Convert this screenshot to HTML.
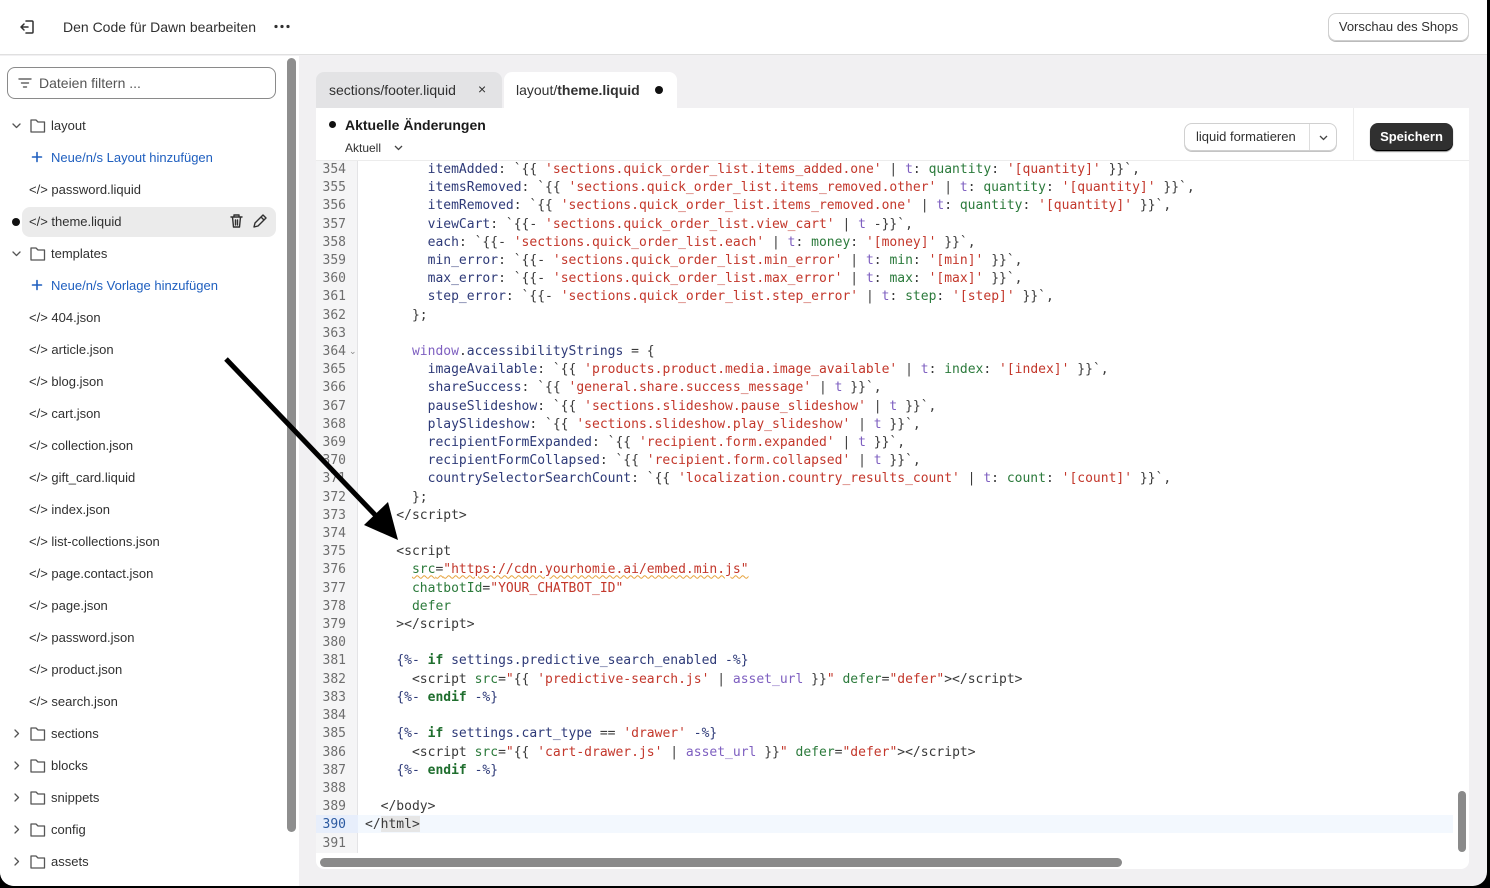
<!DOCTYPE html>
<html><head><meta charset="utf-8">
<style>
*{margin:0;padding:0;box-sizing:border-box}
body{width:1490px;height:888px;background:#000;font-family:"Liberation Sans",sans-serif;overflow:hidden;position:relative}
#page{position:absolute;left:0;top:0;width:1487px;height:886px;background:#f1f0f2;border-radius:0 0 14px 14px;overflow:hidden}
#top{position:absolute;left:0;top:0;width:1487px;height:55px;background:#fff;border-bottom:1px solid #e0e0e0}
#side{position:absolute;left:0;top:56px;width:299px;height:830px;background:#fff}
.ab{position:absolute;white-space:nowrap}
.si{position:absolute;font-size:13px;color:#303030;white-space:nowrap;line-height:16px}
.code{position:absolute;font-family:"DejaVu Sans Mono","Liberation Mono",monospace;font-size:13px;white-space:pre;line-height:18.2px;color:#3a3a3a}
.n{color:#2e3a78}.s{color:#c3372b}.p{color:#7e5fc0}.g{color:#2b7a3b}.k{color:#1f6e2e;font-weight:bold}
.w{text-decoration:underline wavy #e6a23c;text-decoration-thickness:1px}
</style></head><body>
<div id="page">
<div id="top">
 <svg class="ab" style="left:18px;top:18px" width="18" height="18" viewBox="0 0 18 18" fill="none" stroke="#303030" stroke-width="1.5" stroke-linecap="round" stroke-linejoin="round"><path d="M8 3h6a1 1 0 0 1 1 1v10a1 1 0 0 1-1 1H8"/><path d="M10 9H3M6 6 3 9l3 3"/></svg>
 <div class="ab" style="left:63px;top:19px;font-size:14px;color:#303030">Den Code für Dawn bearbeiten</div>
 <svg class="ab" style="left:274px;top:24px" width="16" height="5" fill="#303030"><circle cx="2" cy="2.5" r="1.6"/><circle cx="8" cy="2.5" r="1.6"/><circle cx="14" cy="2.5" r="1.6"/></svg>
 <div class="ab" style="left:1328px;top:13px;width:141px;height:28px;border:1px solid #cfcfcf;border-radius:8px;box-shadow:0 1px 0 #bbb;font-size:13px;color:#303030;text-align:center;line-height:26px">Vorschau des Shops</div>
</div>
<div id="side">
 <div class="ab" style="left:7px;top:11px;width:269px;height:32px;border:1px solid #8a8a8a;border-radius:8px"></div>
 <svg class="ab" style="left:18px;top:21px" width="14" height="12" stroke="#666" stroke-width="1.4" stroke-linecap="round"><path d="M1 2h12M3.5 6h7M5.5 10h3"/></svg>
 <div class="si" style="left:39px;top:19px;font-size:14px;color:#555">Dateien filtern ...</div>
 <div class="ab" style="left:287px;top:2px;width:9px;height:774px;background:#8e8e8e;border-radius:5px"></div>
 <div class="ab" style="left:22px;top:151px;width:254px;height:30px;background:#ebebeb;border-radius:8px"></div>
 <div class="ab" style="left:12px;top:162px;width:8px;height:8px;background:#111;border-radius:50%"></div>
</div>
<div id="sideitems" style="position:absolute;left:0;top:0">
<svg class="ab" style="left:0;top:0" width="60" height="888" fill="none" stroke="#555" stroke-width="1.3" stroke-linecap="round" stroke-linejoin="round">
 <g id="fo"><path d="M31 120h5l2 2h6.5v10h-13.5z"/></g>
 <path d="M13 124l3.5 3.5 3.5-3.5"/>
 <use href="#fo" y="128"/><path d="M13 252l3.5 3.5 3.5-3.5"/>
 <use href="#fo" y="608"/><path d="M15 730l3.5 3.5-3.5 3.5"/>
 <use href="#fo" y="640"/><path d="M15 762l3.5 3.5-3.5 3.5"/>
 <use href="#fo" y="672"/><path d="M15 794l3.5 3.5-3.5 3.5"/>
 <use href="#fo" y="704"/><path d="M15 826l3.5 3.5-3.5 3.5"/>
 <use href="#fo" y="736"/><path d="M15 858l3.5 3.5-3.5 3.5"/>
 <path stroke="#1f5fbf" stroke-width="1.6" d="M32.5 157h9M37 152.5v9M32.5 285h9M37 280.5v9"/>
</svg>
<div class="si" style="left:51px;top:118px">layout</div>
<div class="si" style="left:51px;top:150px;color:#1f5fbf">Neue/n/s Layout hinzufügen</div>
<div class="si" style="left:29px;top:182px">&lt;/&gt; password.liquid</div>
<div class="si" style="left:29px;top:214px">&lt;/&gt; theme.liquid</div>
<svg class="ab" style="left:228px;top:213px" width="42" height="17" fill="none" stroke="#303030" stroke-width="1.4" stroke-linecap="round" stroke-linejoin="round"><path d="M3 4h11M6 4V2h5v2M4.5 4l1 10h6l1-10M7.5 7v5M9.5 7v5"/><path d="M26 14l1-4 8-8 3 3-8 8z M33 4l3 3"/></svg>
<div class="si" style="left:51px;top:246px">templates</div>
<div class="si" style="left:51px;top:278px;color:#1f5fbf">Neue/n/s Vorlage hinzufügen</div>
<div class="si" style="left:29px;top:310px">&lt;/&gt; 404.json</div>
<div class="si" style="left:29px;top:342px">&lt;/&gt; article.json</div>
<div class="si" style="left:29px;top:374px">&lt;/&gt; blog.json</div>
<div class="si" style="left:29px;top:406px">&lt;/&gt; cart.json</div>
<div class="si" style="left:29px;top:438px">&lt;/&gt; collection.json</div>
<div class="si" style="left:29px;top:470px">&lt;/&gt; gift_card.liquid</div>
<div class="si" style="left:29px;top:502px">&lt;/&gt; index.json</div>
<div class="si" style="left:29px;top:534px">&lt;/&gt; list-collections.json</div>
<div class="si" style="left:29px;top:566px">&lt;/&gt; page.contact.json</div>
<div class="si" style="left:29px;top:598px">&lt;/&gt; page.json</div>
<div class="si" style="left:29px;top:630px">&lt;/&gt; password.json</div>
<div class="si" style="left:29px;top:662px">&lt;/&gt; product.json</div>
<div class="si" style="left:29px;top:694px">&lt;/&gt; search.json</div>
<div class="si" style="left:51px;top:726px">sections</div>
<div class="si" style="left:51px;top:758px">blocks</div>
<div class="si" style="left:51px;top:790px">snippets</div>
<div class="si" style="left:51px;top:822px">config</div>
<div class="si" style="left:51px;top:854px">assets</div>
</div>

<div class="ab" style="left:316px;top:72px;width:186px;height:38px;background:#e3e3e5;border-radius:8px 8px 0 0"></div>
<div class="ab" style="left:329px;top:82px;font-size:14px;color:#303030">sections/footer.liquid</div>
<div class="ab" style="left:478px;top:81px;font-size:14px;color:#303030">×</div>
<div class="ab" style="left:504px;top:72px;width:173px;height:38px;background:#fff;border-radius:8px 8px 0 0"></div>
<div class="ab" style="left:516px;top:82px;font-size:14px;color:#303030">layout/<b>theme.liquid</b></div>
<div class="ab" style="left:655px;top:86px;width:8px;height:8px;background:#111;border-radius:50%"></div>

<div class="ab" style="left:316px;top:108px;width:1153px;height:761px;background:#fff;border-radius:0 0 8px 8px;overflow:hidden">
 <div class="ab" style="left:0;top:52px;width:1153px;height:1px;background:#ececec"></div>
 <div class="ab" style="left:1037px;top:0;width:1px;height:52px;background:#ececec"></div>
 <div class="ab" style="left:13px;top:13px;width:7px;height:7px;background:#111;border-radius:50%"></div>
 <div class="ab" style="left:29px;top:9px;font-size:14px;color:#1a1a1a;font-weight:bold">Aktuelle Änderungen</div>
 <div class="ab" style="left:29px;top:33px;font-size:12px;color:#303030">Aktuell</div>
 <svg class="ab" style="left:78px;top:37px" width="9" height="6" fill="none" stroke="#444" stroke-width="1.3"><path d="M1 1l3.5 3.5L8 1"/></svg>
 <div class="ab" style="left:868px;top:15px;width:153px;height:28px;border:1px solid #d0d0d0;border-radius:8px;box-shadow:0 1px 0 #c4c4c4"></div>
 <div class="ab" style="left:880px;top:21px;font-size:13px;color:#303030">liquid formatieren</div>
 <div class="ab" style="left:993px;top:16px;width:1px;height:26px;background:#ddd"></div>
 <svg class="ab" style="left:1003px;top:27px" width="9" height="6" fill="none" stroke="#444" stroke-width="1.3"><path d="M1 1l3.5 3.5L8 1"/></svg>
 <div class="ab" style="left:1054px;top:15px;width:83px;height:28px;background:#303030;border-radius:8px;box-shadow:inset 0 -1px 0 #000,0 1px 1px #888;color:#fff;font-size:13px;font-weight:bold;text-align:center;line-height:28px">Speichern</div>
 <div class="ab" style="left:0;top:53px;width:42px;height:692px;background:#f5f5f6;border-right:1px solid #e4e4e6"></div>
 <div class="ab" style="left:0;top:707px;width:42px;height:18px;background:#e7eefb"></div>
 <div class="ab" style="left:42px;top:707px;width:1095px;height:18px;background:#f3f8fe"></div>
 <div class="ab" style="left:65px;top:708px;width:39px;height:16px;background:#e6e6e6"></div>
 <div class="ab" style="left:0;top:53px;width:1153px;height:692px;overflow:hidden">
 <div class="code" style="left:0;top:0px;width:30px;text-align:right;color:#6e6e6e">354
355
356
357
358
359
360
361
362
363
364
365
366
367
368
369
370
371
372
373
374
375
376
377
378
379
380
381
382
383
384
385
386
387
388
389
<span style="color:#2c5aa0">390</span>
391</div>
 <div class="ab" style="left:33px;top:185px;font-size:9px;color:#888">⌄</div>
 <div class="code" style="left:49px;top:0px">        <span class="n">itemAdded</span>: `{{ <span class="s">'sections.quick_order_list.items_added.one'</span> | <span class="p">t</span>: <span class="g">quantity</span>: <span class="s">'[quantity]'</span> }}`,
        <span class="n">itemsRemoved</span>: `{{ <span class="s">'sections.quick_order_list.items_removed.other'</span> | <span class="p">t</span>: <span class="g">quantity</span>: <span class="s">'[quantity]'</span> }}`,
        <span class="n">itemRemoved</span>: `{{ <span class="s">'sections.quick_order_list.items_removed.one'</span> | <span class="p">t</span>: <span class="g">quantity</span>: <span class="s">'[quantity]'</span> }}`,
        <span class="n">viewCart</span>: `{{- <span class="s">'sections.quick_order_list.view_cart'</span> | <span class="p">t</span> -}}`,
        <span class="n">each</span>: `{{- <span class="s">'sections.quick_order_list.each'</span> | <span class="p">t</span>: <span class="g">money</span>: <span class="s">'[money]'</span> }}`,
        <span class="n">min_error</span>: `{{- <span class="s">'sections.quick_order_list.min_error'</span> | <span class="p">t</span>: <span class="g">min</span>: <span class="s">'[min]'</span> }}`,
        <span class="n">max_error</span>: `{{- <span class="s">'sections.quick_order_list.max_error'</span> | <span class="p">t</span>: <span class="g">max</span>: <span class="s">'[max]'</span> }}`,
        <span class="n">step_error</span>: `{{- <span class="s">'sections.quick_order_list.step_error'</span> | <span class="p">t</span>: <span class="g">step</span>: <span class="s">'[step]'</span> }}`,
      };

      <span class="p">window</span>.<span class="n">accessibilityStrings</span> = {
        <span class="n">imageAvailable</span>: `{{ <span class="s">'products.product.media.image_available'</span> | <span class="p">t</span>: <span class="g">index</span>: <span class="s">'[index]'</span> }}`,
        <span class="n">shareSuccess</span>: `{{ <span class="s">'general.share.success_message'</span> | <span class="p">t</span> }}`,
        <span class="n">pauseSlideshow</span>: `{{ <span class="s">'sections.slideshow.pause_slideshow'</span> | <span class="p">t</span> }}`,
        <span class="n">playSlideshow</span>: `{{ <span class="s">'sections.slideshow.play_slideshow'</span> | <span class="p">t</span> }}`,
        <span class="n">recipientFormExpanded</span>: `{{ <span class="s">'recipient.form.expanded'</span> | <span class="p">t</span> }}`,
        <span class="n">recipientFormCollapsed</span>: `{{ <span class="s">'recipient.form.collapsed'</span> | <span class="p">t</span> }}`,
        <span class="n">countrySelectorSearchCount</span>: `{{ <span class="s">'localization.country_results_count'</span> | <span class="p">t</span>: <span class="g">count</span>: <span class="s">'[count]'</span> }}`,
      };
    &lt;/script&gt;

    &lt;script
      <span class="w"><span class="g">src</span>=<span class="s">"https://cdn.yourhomie.ai/embed.min.js"</span></span>
      <span class="g">chatbotId</span>=<span class="s">"YOUR_CHATBOT_ID"</span>
      <span class="g">defer</span>
    &gt;&lt;/script&gt;

    <span class="n">{%-</span> <span class="k">if</span> <span class="n">settings.predictive_search_enabled</span> <span class="n">-%}</span>
      &lt;script <span class="g">src</span>=<span class="s">"</span>{{ <span class="s">'predictive-search.js'</span> | <span class="p">asset_url</span> }}<span class="s">"</span> <span class="g">defer</span>=<span class="s">"defer"</span>&gt;&lt;/script&gt;
    <span class="n">{%-</span> <span class="k">endif</span> <span class="n">-%}</span>

    <span class="n">{%-</span> <span class="k">if</span> <span class="n">settings.cart_type</span> == <span class="s">'drawer'</span> <span class="n">-%}</span>
      &lt;script <span class="g">src</span>=<span class="s">"</span>{{ <span class="s">'cart-drawer.js'</span> | <span class="p">asset_url</span> }}<span class="s">"</span> <span class="g">defer</span>=<span class="s">"defer"</span>&gt;&lt;/script&gt;
    <span class="n">{%-</span> <span class="k">endif</span> <span class="n">-%}</span>

  &lt;/body&gt;
&lt;/html&gt;
</div>
 </div>
 <div class="ab" style="left:1142px;top:683px;width:8px;height:61px;background:#8a8a8a;border-radius:4px"></div>
 <div class="ab" style="left:4px;top:750px;width:802px;height:9px;background:#8a8a8a;border-radius:5px"></div>
</div>

<svg class="ab" style="left:0;top:0" width="1487" height="886">
 <line x1="226" y1="359" x2="380" y2="520" stroke="#000" stroke-width="5"/>
 <polygon points="398,540 364,525 388,502" fill="#000"/>
</svg>
</div>
</body></html>
